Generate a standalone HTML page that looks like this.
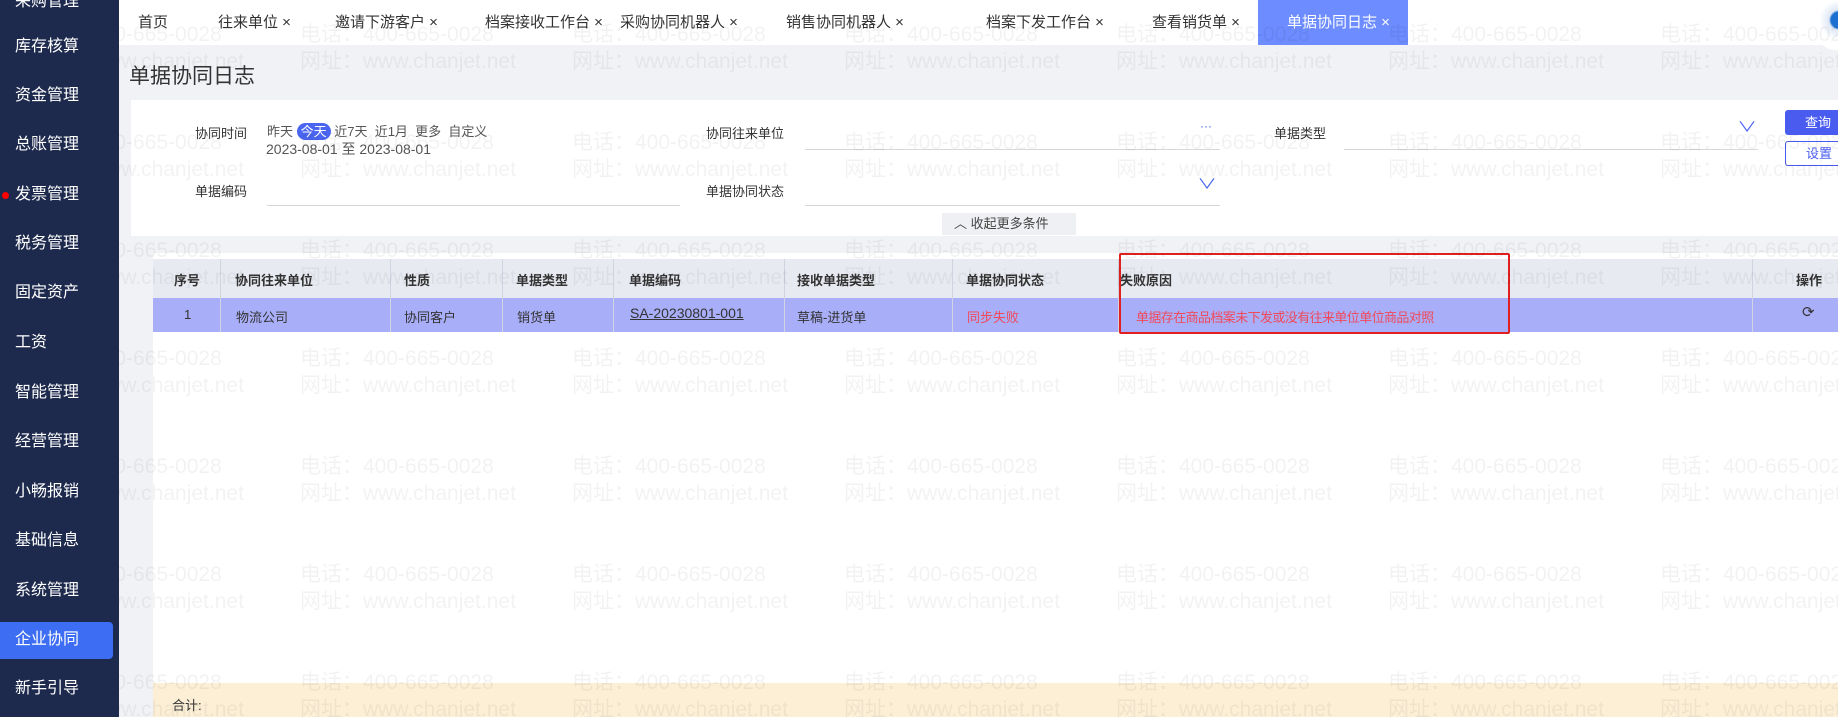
<!DOCTYPE html>
<html><head><meta charset="utf-8"><style>
*{margin:0;padding:0;box-sizing:border-box}
html{width:1838px;height:717px;overflow:hidden}
body{width:1838px;height:717px;overflow:hidden;position:relative;background:#f0f2f5;font-family:"Liberation Sans","Noto Sans CJK SC",sans-serif;color:#333}
.a{position:absolute;white-space:nowrap}
#side{position:absolute;left:0;top:0;width:119px;height:717px;background:#1d2a4d}
#side div{position:absolute;left:15px;color:#fff;font-size:16px;line-height:20px}
#tabs{position:absolute;left:119px;top:0;width:1719px;height:45px;background:#fff}
.tab{position:absolute;top:11px;font-size:15px;color:#333}
.wm{position:absolute;color:rgba(0,0,0,0.05);font-size:21px;white-space:nowrap}
.lbl{font-size:13px;color:#333}
.ul{position:absolute;height:1px;background:#d8d8d8}
#wm{position:absolute;left:0;top:0;width:1838px;height:717px;overflow:hidden}
</style></head><body>
<div id="tabs">
<div class="tab" style="left:19px">首页</div>
<div class="tab" style="left:99px">往来单位 ×</div>
<div class="tab" style="left:216px">邀请下游客户 ×</div>
<div class="tab" style="left:366px">档案接收工作台 ×</div>
<div class="tab" style="left:501px">采购协同机器人 ×</div>
<div class="tab" style="left:667px">销售协同机器人 ×</div>
<div class="tab" style="left:867px">档案下发工作台 ×</div>
<div class="tab" style="left:1033px">查看销货单 ×</div>
<div style="position:absolute;left:1139px;top:0;width:150px;height:45px;background:#6c8cff"></div>
<div class="tab" style="left:1168px;color:#fff">单据协同日志 ×</div>
<div style="position:absolute;left:1696px;top:0;width:40px;height:50px;border-radius:50%;background:radial-gradient(circle at 60% 40%,#1a6fd0 0 8px,#dfe8f5 10px,#fff 20px)"></div>
</div>
<div style="position:absolute;left:131px;top:100px;width:1707px;height:136px;background:#fff"></div>
<div class="a" style="left:129px;top:60px;font-size:21px;color:#333">单据协同日志</div>
<div class="a lbl" style="left:195px;top:123px">协同时间</div>
<div class="a" style="left:267px;top:121px;font-size:13px;color:#555">昨天 <span style="background:#4a66f0;color:#fff;border-radius:9px;padding:1px 4px">今天</span> 近7天 &nbsp;近1月 &nbsp;更多 &nbsp;自定义</div>
<div class="a" style="left:266px;top:139px;font-size:14px;color:#555">2023-08-01 至 2023-08-01</div>
<div class="a lbl" style="left:706px;top:123px">协同往来单位</div>
<div class="ul" style="left:805px;top:149px;width:415px"></div>
<div class="a" style="left:1200px;top:119px;color:#4a66f0;font-size:12px">···</div>
<div class="a lbl" style="left:1274px;top:123px">单据类型</div>
<div class="ul" style="left:1344px;top:149px;width:414px"></div>
<div class="a" style="left:1740px;top:117px;color:#4a66f0;font-size:14px;transform:scaleX(1.4)">∨</div>
<div class="a" style="left:1785px;top:110px;width:53px;height:25px;background:#4a5cf0;border-radius:3px 0 0 3px;color:#fff;font-size:13px;line-height:25px;padding-left:20px">查询</div>
<div class="a" style="left:1785px;top:141px;width:53px;height:25px;border:1px solid #4a5cf0;border-right:none;border-radius:3px 0 0 3px;color:#4a5cf0;font-size:13px;line-height:23px;padding-left:20px">设置</div>
<div class="a lbl" style="left:195px;top:181px">单据编码</div>
<div class="ul" style="left:267px;top:205px;width:413px"></div>
<div class="a lbl" style="left:706px;top:181px">单据协同状态</div>
<div class="ul" style="left:805px;top:205px;width:415px"></div>
<div class="a" style="left:1200px;top:174px;color:#4a66f0;font-size:14px;transform:scaleX(1.4)">∨</div>
<div class="a" style="left:942px;top:213px;width:134px;height:22px;background:#eef0f3;font-size:13px;line-height:22px;padding-left:12px;color:#444">︿ 收起更多条件</div>
<div style="position:absolute;left:153px;top:253px;width:1685px;height:430px;background:#fff"></div>
<div style="position:absolute;left:153px;top:259px;width:1685px;height:39px;background:#e8eaf2"></div>
<div style="position:absolute;left:153px;top:298px;width:1685px;height:34px;background:#a9aef9"></div>
<div style="position:absolute;left:220px;top:259px;width:1px;height:73px;background:#d0d3e0"></div>
<div style="position:absolute;left:390px;top:259px;width:1px;height:73px;background:#d0d3e0"></div>
<div style="position:absolute;left:502px;top:259px;width:1px;height:73px;background:#d0d3e0"></div>
<div style="position:absolute;left:613px;top:259px;width:1px;height:73px;background:#d0d3e0"></div>
<div style="position:absolute;left:784px;top:259px;width:1px;height:73px;background:#d0d3e0"></div>
<div style="position:absolute;left:952px;top:259px;width:1px;height:73px;background:#d0d3e0"></div>
<div style="position:absolute;left:1118px;top:259px;width:1px;height:73px;background:#d0d3e0"></div>
<div style="position:absolute;left:1752px;top:259px;width:1px;height:73px;background:#d0d3e0"></div>
<div class="a lbl" style="left:174px;top:270px;font-weight:bold">序号</div>
<div class="a lbl" style="left:235px;top:270px;font-weight:bold">协同往来单位</div>
<div class="a lbl" style="left:404px;top:270px;font-weight:bold">性质</div>
<div class="a lbl" style="left:516px;top:270px;font-weight:bold">单据类型</div>
<div class="a lbl" style="left:629px;top:270px;font-weight:bold">单据编码</div>
<div class="a lbl" style="left:797px;top:270px;font-weight:bold">接收单据类型</div>
<div class="a lbl" style="left:966px;top:270px;font-weight:bold">单据协同状态</div>
<div class="a lbl" style="left:1120px;top:270px;font-weight:bold">失败原因</div>
<div class="a lbl" style="left:1796px;top:270px;font-weight:bold">操作</div>
<div class="a lbl" style="left:184px;top:307px">1</div>
<div class="a lbl" style="left:236px;top:307px">物流公司</div>
<div class="a lbl" style="left:404px;top:307px">协同客户</div>
<div class="a lbl" style="left:517px;top:307px">销货单</div>
<div class="a" style="left:630px;top:305px;font-size:14px;text-decoration:underline;color:#333">SA-20230801-001</div>
<div class="a lbl" style="left:797px;top:307px">草稿-进货单</div>
<div class="a lbl" style="left:967px;top:307px;color:#f04a5a">同步失败</div>
<div class="a lbl" style="left:1136px;top:307px;color:#f04a5a;letter-spacing:-0.6px">单据存在商品档案未下发或没有往来单位单位商品对照</div>
<div class="a" style="left:1802px;top:303px;font-size:15px;color:#333">⟳</div>
<div style="position:absolute;left:1119px;top:253px;width:391px;height:81px;border:2px solid #e02020;border-radius:2px"></div>
<div style="position:absolute;left:153px;top:683px;width:1685px;height:34px;background:#fcefd6"></div>
<div class="a lbl" style="left:172px;top:695px">合计:</div>
<div id="wm"></div>
<div id="side">
<div style="top:-8px">采购管理</div>
<div style="top:37px">库存核算</div>
<div style="top:86px">资金管理</div>
<div style="top:135px">总账管理</div>
<div style="top:185px">发票管理</div>
<div style="top:234px">税务管理</div>
<div style="top:283px">固定资产</div>
<div style="top:333px">工资</div>
<div style="top:383px">智能管理</div>
<div style="top:432px">经营管理</div>
<div style="top:482px">小畅报销</div>
<div style="top:531px">基础信息</div>
<div style="top:581px">系统管理</div>
<div style="top:622px;left:0;width:113px;height:37px;background:#3d6df2;border-radius:0 4px 4px 0"></div>
<div style="top:630px">企业协同</div>
<div style="top:679px">新手引导</div>
<span style="position:absolute;left:2px;top:192px;width:7px;height:7px;border-radius:50%;background:#f00"></span>
</div>
<script>
var h='';
for(var r=0;r<6;r++){for(var c=0;c<7;c++){var x=28+c*272,y=140+r*108;
h+='<div class="wm" style="left:'+x+'px;top:'+(y-14)+'px">电话：400-665-0028</div>';
h+='<div class="wm" style="left:'+x+'px;top:'+(y+13)+'px">网址：www.chanjet.net</div>';}}
for(var c=0;c<7;c++){h+='<div class="wm" style="left:'+(28+c*272)+'px;top:45px">网址：www.chanjet.net</div><div class="wm" style="left:'+(28+c*272)+'px;top:18px">电话：400-665-0028</div>';}
document.getElementById('wm').innerHTML=h;
</script>
</body></html>
